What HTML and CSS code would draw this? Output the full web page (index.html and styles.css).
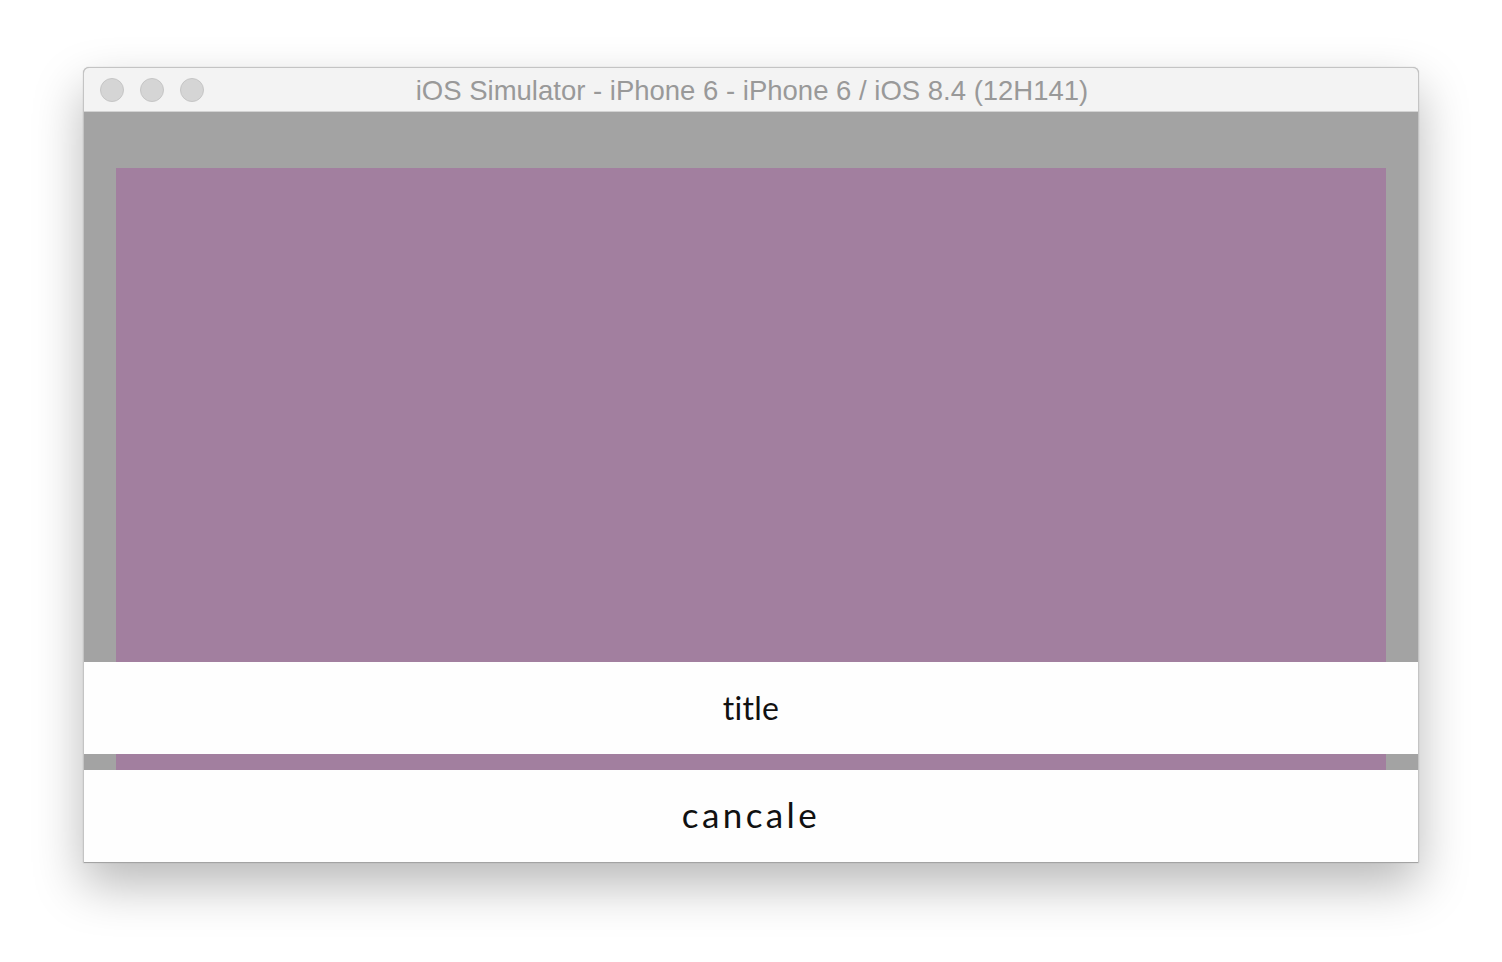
FILE: index.html
```html
<!DOCTYPE html>
<html>
<head>
<meta charset="utf-8">
<link rel="stylesheet" href="styles.css">
</head>
<body>
<div class="stage">
  <div class="window">
    <div class="titlebar">
      <div class="lights">
        <span class="light"></span><span class="light"></span><span class="light"></span>
      </div>
      <div class="wtitle">iOS Simulator - iPhone 6 - iPhone 6 / iOS 8.4 (12H141)</div>
    </div>
    <div class="screen">
      <div class="purple"></div>
      <div class="sheet">
        <div class="row title">title</div>
        <div class="gap"><div class="gap-purple"></div></div>
        <div class="row cancel">cancale</div>
      </div>
    </div>
  </div>
</div>
</body>
</html>
```
FILE: styles.css
```css
html, body {
  margin: 0;
  padding: 0;
  background: #ffffff;
}
.stage {
  width: 1502px;
  height: 962px;
  padding: 67px 0 0 83px;
  box-sizing: border-box;
}
.window {
  width: 1336px;
  height: 796px;
  border-radius: 6px 6px 0 0;
  border: 1px solid #c4c4c4;
  border-bottom: none;
  box-sizing: border-box;
  overflow: hidden;
  box-shadow: 0 22px 50px rgba(0,0,0,0.28), 0 0 1px rgba(0,0,0,0.3);
  display: flex;
  flex-direction: column;
  background: #a3a3a3;
}
.titlebar {
  height: 43px;
  flex: none;
  background: #f3f3f3;
  border-bottom: 1px solid #d2d2d2;
  display: flex;
  align-items: center;
  position: relative;
}
.lights {
  display: flex;
  gap: 16px;
  padding-left: 16px;
  padding-top: 1px;
}
.light {
  width: 24px;
  height: 24px;
  border-radius: 50%;
  background: #d5d5d5;
  border: 1px solid #c6c6c6;
  box-sizing: border-box;
}
.wtitle {
  position: absolute;
  left: 0;
  right: 0;
  top: 0;
  bottom: 0;
  display: flex;
  align-items: center;
  justify-content: center;
  font-family: "Liberation Sans", Arial, sans-serif;
  font-size: 27.5px;
  color: #999999;
  padding-top: 2px;
  padding-left: 2px;
}
.screen {
  flex: 1;
  position: relative;
  background: #a3a3a3;
  padding: 56px 32px 0 32px;
  display: flex;
  flex-direction: column;
}
.purple {
  height: 494px;
  background: #a27f9f;
  flex: none;
}
.sheet {
  margin: 0 -32px;
  display: flex;
  flex-direction: column;
}
.row {
  height: 92px;
  box-sizing: border-box;
  flex: none;
  background: #fefefe;
  display: flex;
  align-items: center;
  justify-content: center;
  font-family: "Lato", "Noto Sans", sans-serif;
  font-variant-ligatures: none;
  color: #111;
}
.title {
  font-size: 32px;
  letter-spacing: 0.3px;
  padding-bottom: 2px;
}
.cancel {
  letter-spacing: 3.4px;
  font-size: 35px;
  padding-bottom: 4px;
}
.gap {
  height: 16px;
  flex: none;
  background: #a3a3a3;
  padding: 0 32px;
}
.gap-purple {
  height: 100%;
  background: #a27f9f;
}
```
